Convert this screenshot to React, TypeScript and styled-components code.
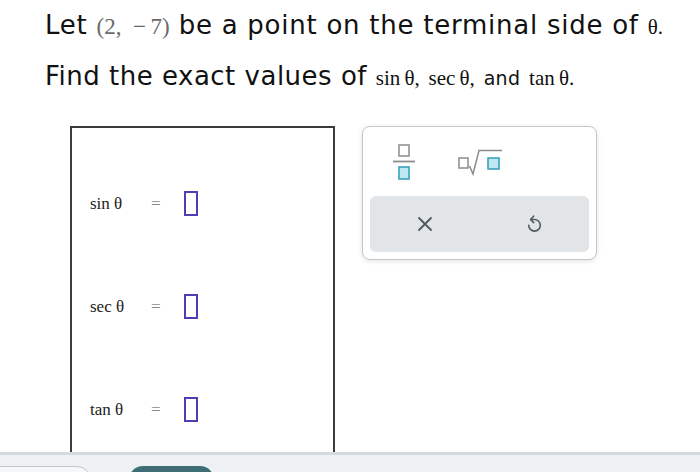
import React from "react";
import styled, { createGlobalStyle } from "styled-components";

const Global = createGlobalStyle`
  html, body { margin: 0; padding: 0; background: #ffffff; }
  body { font-family: "DejaVu Sans", Verdana, sans-serif; color: #111; }
`;

const Page = styled.div`
  width: 700px;
  height: 472px;
  display: flex;
  flex-direction: column;
  overflow: hidden;
  background: #fff;
`;

const Main = styled.main`
  flex: 1;
  min-height: 0;
  overflow: hidden;
  display: flex;
  flex-direction: column;
`;

const Question = styled.section`
  padding: 10px 0 0 45px;
  display: flex;
  flex-direction: column;
  gap: 20px;
`;

const Line = styled.p<{ $spacing?: number }>`
  margin: 0;
  height: 31px;
  font-family: "DejaVu Sans", Verdana, sans-serif;
  font-size: 26px;
  letter-spacing: ${(p) => p.$spacing ?? 0.5}px;
  line-height: 31px;
  color: #111;
  white-space: nowrap;
`;

const Math = styled.span<{ $size?: number; $muted?: boolean }>`
  font-family: "Liberation Serif", "Times New Roman", serif;
  font-size: ${(p) => p.$size ?? 22}px;
  letter-spacing: 0;
  color: ${(p) => (p.$muted ? "#6a6a6a" : "#111")};
`;

const Small = styled.span`
  font-size: 19px;
  letter-spacing: 0.3px;
`;

const Workspace = styled.div`
  display: flex;
  align-items: flex-start;
  padding: 34px 0 0 70px;
  gap: 27px;
  flex: 1;
  min-height: 0;
`;

const AnswerPanel = styled.div`
  width: 261px;
  align-self: stretch;
  border: 2px solid #3c3c3c;
  border-bottom: none;
  padding-top: 24px;
  display: flex;
  flex-direction: column;
`;

const Row = styled.div`
  height: 103px;
  flex-shrink: 0;
  display: flex;
  align-items: center;
  padding-left: 18px;
`;

const Label = styled.span`
  width: 61px;
  font-family: "Liberation Serif", "Times New Roman", serif;
  font-size: 17px;
  color: #222;
`;

const Equals = styled.span`
  width: 33px;
  font-family: "Liberation Serif", "Times New Roman", serif;
  font-size: 17px;
  color: #888;
`;

const Slot = styled.span`
  width: 10px;
  height: 21px;
  border: 2px solid #4b3fb3;
  display: inline-block;
`;

const Keypad = styled.div`
  width: 219px;
  height: 125px;
  border: 1px solid #c4c8cb;
  border-radius: 8px;
  box-shadow: 0 1px 5px rgba(0, 0, 0, 0.12);
  background: #fff;
  display: flex;
  flex-direction: column;
  padding: 0 7px 7px;
  box-sizing: content-box;
`;

const IconRow = styled.div`
  height: 69px;
  display: flex;
  align-items: center;
  padding-left: 8px;
  gap: 24px;
`;

const IconButton = styled.button`
  width: 52px;
  height: 44px;
  border: none;
  background: transparent;
  padding: 0;
  display: flex;
  align-items: center;
  justify-content: center;
`;

const ActionBar = styled.div`
  flex: 1;
  background: #e1e5e8;
  border-radius: 6px;
  display: grid;
  grid-template-columns: 1fr 1fr;
  align-items: center;
`;

const ActionButton = styled.button`
  border: none;
  background: transparent;
  height: 100%;
  display: flex;
  align-items: center;
  justify-content: center;
  padding: 0;
`;

const Footer = styled.footer`
  height: 20px;
  box-sizing: border-box;
  flex-shrink: 0;
  border-top: 3px solid #d4dadd;
  background: #eef1f3;
  display: flex;
  align-items: flex-start;
  padding-top: 11px;
  overflow: hidden;
  gap: 38px;
`;

const GhostButton = styled.div`
  width: 106px;
  height: 30px;
  margin-left: -17px;
  border: 1px solid #c2c6c9;
  border-radius: 14px;
  background: #f6f7f8;
  flex-shrink: 0;
`;

const PrimaryButton = styled.div`
  width: 85px;
  height: 30px;
  border-radius: 14px;
  background: #3f6d74;
  flex-shrink: 0;
`;

const FractionIcon = () => (
  <svg width="24" height="40" viewBox="0 0 24 40">
    <rect x="7" y="3" width="10" height="11" fill="none" stroke="#8c8c8c" strokeWidth="1.5" />
    <line x1="1" y1="19.5" x2="23" y2="19.5" stroke="#8c8c8c" strokeWidth="1.8" />
    <rect x="7" y="25" width="10" height="12" fill="#bfe8f2" stroke="#2f9db6" strokeWidth="1.5" />
  </svg>
);

const SqrtIcon = () => (
  <svg width="48" height="28" viewBox="0 0 48 28">
    <rect x="3" y="10" width="9" height="10" fill="none" stroke="#8c8c8c" strokeWidth="1.5" />
    <polyline points="13.5,18 17,26 23,2.5 46,2.5" fill="none" stroke="#8c8c8c" strokeWidth="1.5" />
    <rect x="32" y="10" width="11" height="11" fill="#bfe8f2" stroke="#2f9db6" strokeWidth="1.5" />
  </svg>
);

const CloseIcon = () => (
  <svg width="16" height="16" viewBox="0 0 16 16">
    <path d="M2 2 L14 14 M14 2 L2 14" stroke="#4b5b61" strokeWidth="1.8" strokeLinecap="round" />
  </svg>
);

const UndoIcon = () => (
  <svg width="18" height="22" viewBox="0 0 18 22">
    <path
      d="M6 6.5 H9.5 A5.8 5.8 0 1 1 3.7 12.3"
      fill="none"
      stroke="#4b5b61"
      strokeWidth="1.6"
      strokeLinecap="round"
      strokeLinejoin="round"
    />
    <path
      d="M8.6 3.2 L5.6 6.5 L8.6 9.6"
      fill="none"
      stroke="#4b5b61"
      strokeWidth="1.6"
      strokeLinecap="round"
      strokeLinejoin="round"
    />
  </svg>
);

const rows = ["sin θ", "sec θ", "tan θ"];

export default function App() {
  return (
    <Page>
      <Global />
      <Main>
        <Question>
          <Line $spacing={0.75}>
            Let <Math $muted $size={23}>(2,&nbsp;&nbsp;−&thinsp;7)</Math> be a point on the terminal side of{" "}
            <Math $size={21}>θ.</Math>
          </Line>
          <Line>
            Find the exact values of <Math $size={21}>sin&thinsp;θ,</Math>{" "}
            <Math $size={21}>sec&thinsp;θ,</Math> <Small>and</Small>{" "}
            <Math $size={21}>tan&thinsp;θ.</Math>
          </Line>
        </Question>
        <Workspace>
          <AnswerPanel>
            {rows.map((r) => (
              <Row key={r}>
                <Label>{r}</Label>
                <Equals>=</Equals>
                <Slot />
              </Row>
            ))}
          </AnswerPanel>
          <Keypad>
            <IconRow>
              <IconButton aria-label="fraction">
                <FractionIcon />
              </IconButton>
              <IconButton aria-label="square root">
                <SqrtIcon />
              </IconButton>
            </IconRow>
            <ActionBar>
              <ActionButton aria-label="clear">
                <CloseIcon />
              </ActionButton>
              <ActionButton aria-label="undo">
                <UndoIcon />
              </ActionButton>
            </ActionBar>
          </Keypad>
        </Workspace>
      </Main>
      <Footer>
        <GhostButton />
        <PrimaryButton />
      </Footer>
    </Page>
  );
}
